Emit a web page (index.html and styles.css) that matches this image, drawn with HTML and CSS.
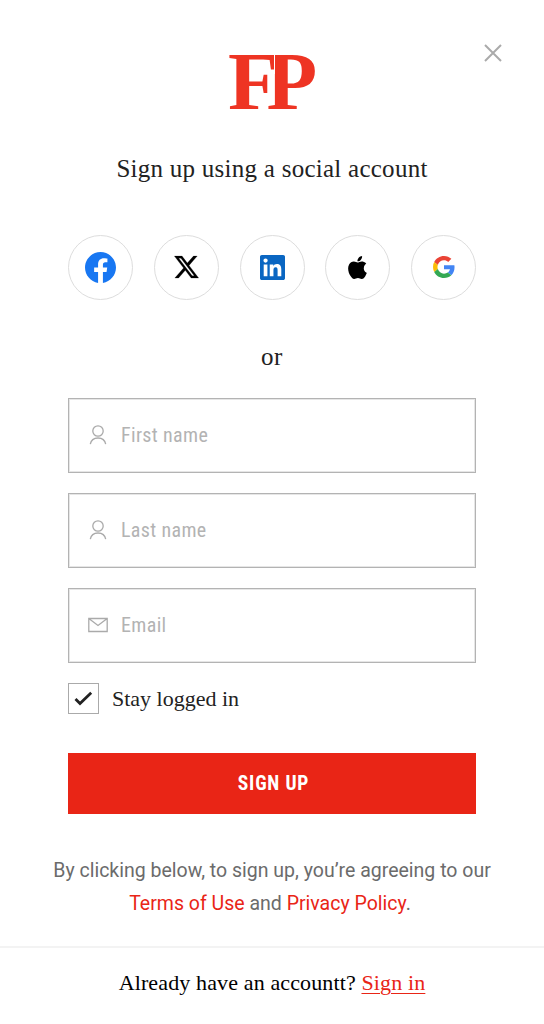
FILE: index.html
```html
<!DOCTYPE html>
<html lang="en">
<head>
    <meta charset="UTF-8">
    <meta name="viewport" content="width=device-width, initial-scale=1.0">
    <title>Sign up</title>
    <link rel="stylesheet" href="styles.css">
</head>
<body>
    <div class="modal">
        <button class="close" type="button" aria-label="Close">
            <svg width="18" height="18" viewBox="0 0 18 18"><path d="M1 1l16 16M17 1L1 17" stroke="#aaa" stroke-width="2" fill="none"/></svg>
        </button>

        <svg class="logo" width="88" height="58" viewBox="0 0 88 58">
            <text x="0" y="55">FP</text>
            <path d="M46.500 0v20" stroke="#fff"/>
        </svg>

        <h1 class="title">Sign up using a social account</h1>

        <div class="social">
            <a class="social-btn" href="#" aria-label="Facebook">
                <svg width="31" height="31" viewBox="0 0 24 24"><path fill="#1877f2" d="M24 12.073c0-6.627-5.373-12-12-12s-12 5.373-12 12c0 5.99 4.388 10.954 10.125 11.854v-8.385H7.078v-3.47h3.047V9.43c0-3.007 1.792-4.669 4.533-4.669 1.312 0 2.686.235 2.686.235v2.953H15.83c-1.491 0-1.956.925-1.956 1.874v2.25h3.328l-.532 3.47h-2.796v8.385C19.612 23.027 24 18.062 24 12.073z"/></svg>
            </a>
            <a class="social-btn" href="#" aria-label="X">
                <svg width="25" height="25" viewBox="0 0 24 24"><path d="M18.244 1.25h3.308l-7.227 8.26 8.502 11.24H16.17l-5.214-6.817L4.99 20.75H1.68l7.73-8.835L1.254 1.25H8.08l4.713 6.231zm-1.161 17.52h1.833L7.084 3.126H5.117z" stroke="#000" stroke-width=".2" transform="translate(-1 -.3) scale(1.08)"/></svg>
            </a>
            <a class="social-btn" href="#" aria-label="LinkedIn">
                <svg width="25" height="25" viewBox="0 0 24 24"><path fill="#0a66c2" d="M20.447 20.452h-3.554v-5.569c0-1.328-.027-3.037-1.852-3.037-1.853 0-2.136 1.445-2.136 2.939v5.667H9.351V9h3.414v1.561h.046c.477-.9 1.637-1.85 3.37-1.85 3.601 0 4.267 2.37 4.267 5.455v6.286zM5.337 7.433a2.062 2.062 0 0 1-2.063-2.065 2.064 2.064 0 1 1 2.063 2.065zm1.782 13.019H3.555V9h3.564v11.452zM22.225 0H1.771C.792 0 0 .774 0 1.729v20.542C0 23.227.792 24 1.771 24h20.451C23.2 24 24 23.227 24 22.271V1.729C24 .774 23.2 0 22.222 0h.003z"/></svg>
            </a>
            <a class="social-btn" href="#" aria-label="Apple">
                <svg width="23" height="23" viewBox="0 0 24 24"><path d="M12.152 6.896c-.948 0-2.415-1.078-3.96-1.04-2.04.027-3.91 1.183-4.961 3.014-2.117 3.675-.546 9.103 1.519 12.09 1.013 1.454 2.208 3.09 3.792 3.039 1.52-.065 2.09-.987 3.935-.987 1.831 0 2.35.987 3.96.948 1.637-.026 2.676-1.48 3.676-2.948 1.156-1.688 1.636-3.325 1.662-3.415-.039-.013-3.182-1.221-3.22-4.857-.026-3.04 2.48-4.494 2.597-4.559-1.429-2.09-3.623-2.324-4.39-2.376-2-.156-3.675 1.09-4.61 1.09zM15.53 3.83c.843-1.012 1.4-2.427 1.245-3.83-1.207.052-2.662.805-3.532 1.818-.78.896-1.454 2.338-1.273 3.714 1.338.104 2.715-.688 3.559-1.701"/></svg>
            </a>
            <a class="social-btn" href="#" aria-label="Google">
                <svg width="22" height="22" viewBox="0 0 48 48"><path fill="#ea4335" d="M24 9.5c3.54 0 6.71 1.22 9.21 3.6l6.85-6.85C35.9 2.38 30.47 0 24 0 14.62 0 6.51 5.38 2.56 13.22l7.98 6.19C12.43 13.72 17.74 9.5 24 9.5z"/><path fill="#4285f4" d="M46.98 24.55c0-1.57-.15-3.09-.38-4.55H24v9.02h12.94c-.58 2.96-2.26 5.48-4.78 7.18l7.73 6c4.51-4.18 7.09-10.36 7.09-17.65z"/><path fill="#fbbc05" d="M10.53 28.59c-.48-1.45-.76-2.99-.76-4.59s.27-3.14.76-4.59l-7.98-6.19C.92 16.46 0 20.12 0 24c0 3.88.92 7.54 2.56 10.78l7.97-6.19z"/><path fill="#34a853" d="M24 48c6.48 0 11.93-2.13 15.89-5.81l-7.73-6c-2.15 1.45-4.92 2.3-8.16 2.3-6.26 0-11.57-4.22-13.47-9.91l-7.98 6.19C6.51 42.62 14.62 48 24 48z"/></svg>
            </a>
        </div>

        <p class="or">or</p>

        <form class="form">
            <label class="field">
                <svg width="20" height="20" viewBox="0 0 20 20"><circle cx="10" cy="6" r="5.200"/><path d="M2.300 19.200c.8-4.500 4-6.200 7.700-6.200s6.900 1.700 7.700 6.200"/></svg>
                <input type="text" placeholder="First name">
            </label>
            <label class="field">
                <svg width="20" height="20" viewBox="0 0 20 20"><circle cx="10" cy="6" r="5.200"/><path d="M2.300 19.200c.8-4.500 4-6.200 7.700-6.200s6.900 1.700 7.700 6.200"/></svg>
                <input type="text" placeholder="Last name">
            </label>
            <label class="field">
                <svg width="20" height="20" viewBox="0 0 20 20"><path d="M.8 3.500h18.400v13H.800zM.8 3.500l9.200 7 9.200-7"/></svg>
                <input type="email" placeholder="Email">
            </label>

            <div class="stay">
                <span class="checkbox">
                    <svg width="19" height="15" viewBox="0 0 19 15"><path d="M1.500 8l4.500 4.500L17.200 1.800" fill="none" stroke="#222" stroke-width="2.800"/></svg>
                </span>
                <span>Stay logged in</span>
            </div>

            <button class="submit" type="submit">SIGN UP</button>
        </form>

        <p class="terms">By clicking below, to sign up, you’re agreeing to our<br><span class="terms-links"><a href="#">Terms of Use</a> and <a href="#">Privacy Policy</a>.</span></p>

        <div class="footer"><span>Already have an accountt? <a href="#">Sign in</a></span></div>
    </div>
</body>
</html>
```
FILE: styles.css
```css
* {
    box-sizing: border-box;
}

body {
    margin: 0;
    background: #fff;
    color: #222;
    font-family: "Liberation Serif", serif;
}

.modal {
    position: relative;
    height: 1024px;
    padding-top: 54px;
    display: flex;
    flex-direction: column;
    align-items: center;
    overflow: hidden;
}

.close {
    position: absolute;
    top: 44px;
    right: 42px;
    padding: 0;
    border: 0;
    background: none;
    line-height: 0;
}

.logo {
    display: block;
    overflow: visible;
}

.logo text {
    font-family: "Liberation Serif", serif;
    font-weight: bold;
    font-size: 83px;
    letter-spacing: -12.300px;
    fill: #ee3423;
}

.title {
    margin: 41px 0 0;
    font-size: 25px;
    font-weight: normal;
    line-height: 32px;
    letter-spacing: 0.26px;
    white-space: nowrap;
}

.social {
    width: 408px;
    margin-top: 49.500px;
    display: flex;
    justify-content: space-between;
}

.social-btn {
    width: 65px;
    height: 65px;
    border: 1px solid #ddd;
    border-radius: 50%;
    display: flex;
    align-items: center;
    justify-content: center;
}

.or {
    margin: 42.500px 0 0;
    font-size: 25px;
    line-height: 30px;
    letter-spacing: 0.500px;
}

.form {
    width: 408px;
    margin-top: 26px;
}

.field {
    height: 75px;
    margin-bottom: 20px;
    padding: 0 18px 2px 19px;
    border: 1px solid #b3b3b3;
    box-shadow: inset 0 0 0 1px #e6e6e6;
    display: flex;
    align-items: center;
    gap: 13px;
}

.field svg {
    flex: none;
    fill: none;
    stroke: #aaa;
    stroke-width: 1.300;
}

.field input {
    flex: 1;
    min-width: 0;
    padding: 0;
    border: 0;
    outline: 0;
    font: 20px "Roboto Condensed", Roboto, sans-serif;
    font-stretch: 75%;
    letter-spacing: 0.350px;
}

.field input::placeholder {
    color: #b3b3b3;
}

.stay {
    display: flex;
    align-items: center;
    gap: 13px;
    font-size: 22px;
}

.checkbox {
    width: 31px;
    height: 31px;
    border: 1px solid #aaa;
    display: flex;
    align-items: center;
    justify-content: center;
}

.submit {
    display: block;
    width: 100%;
    height: 61px;
    margin-top: 39px;
    padding: 0 0 0 3px;
    border: 0;
    background: #e92516;
    color: #fff;
    font: bold 19.500px "Roboto Condensed", Roboto, sans-serif;
    font-stretch: 75%;
    letter-spacing: 0.800px;
}

.terms {
    margin: 40px 0 0;
    color: #6b6b6b;
    font: 19.500px/33px Roboto, sans-serif;
    text-align: center;
    white-space: nowrap;
}

.terms-links {
    padding-right: 4px;
}

.terms a {
    color: #e92516;
    text-decoration: none;
}

.footer {
    width: 100%;
    margin-top: 26px;
    padding-top: 19px;
    border-top: 2px solid #f3f3f3;
    color: #000;
    font-size: 22px;
    line-height: 32px;
    letter-spacing: 0.130px;
    text-align: center;
}

.footer a {
    color: #e92516;
    text-underline-offset: 3px;
    text-decoration-thickness: 1px;
}
```
